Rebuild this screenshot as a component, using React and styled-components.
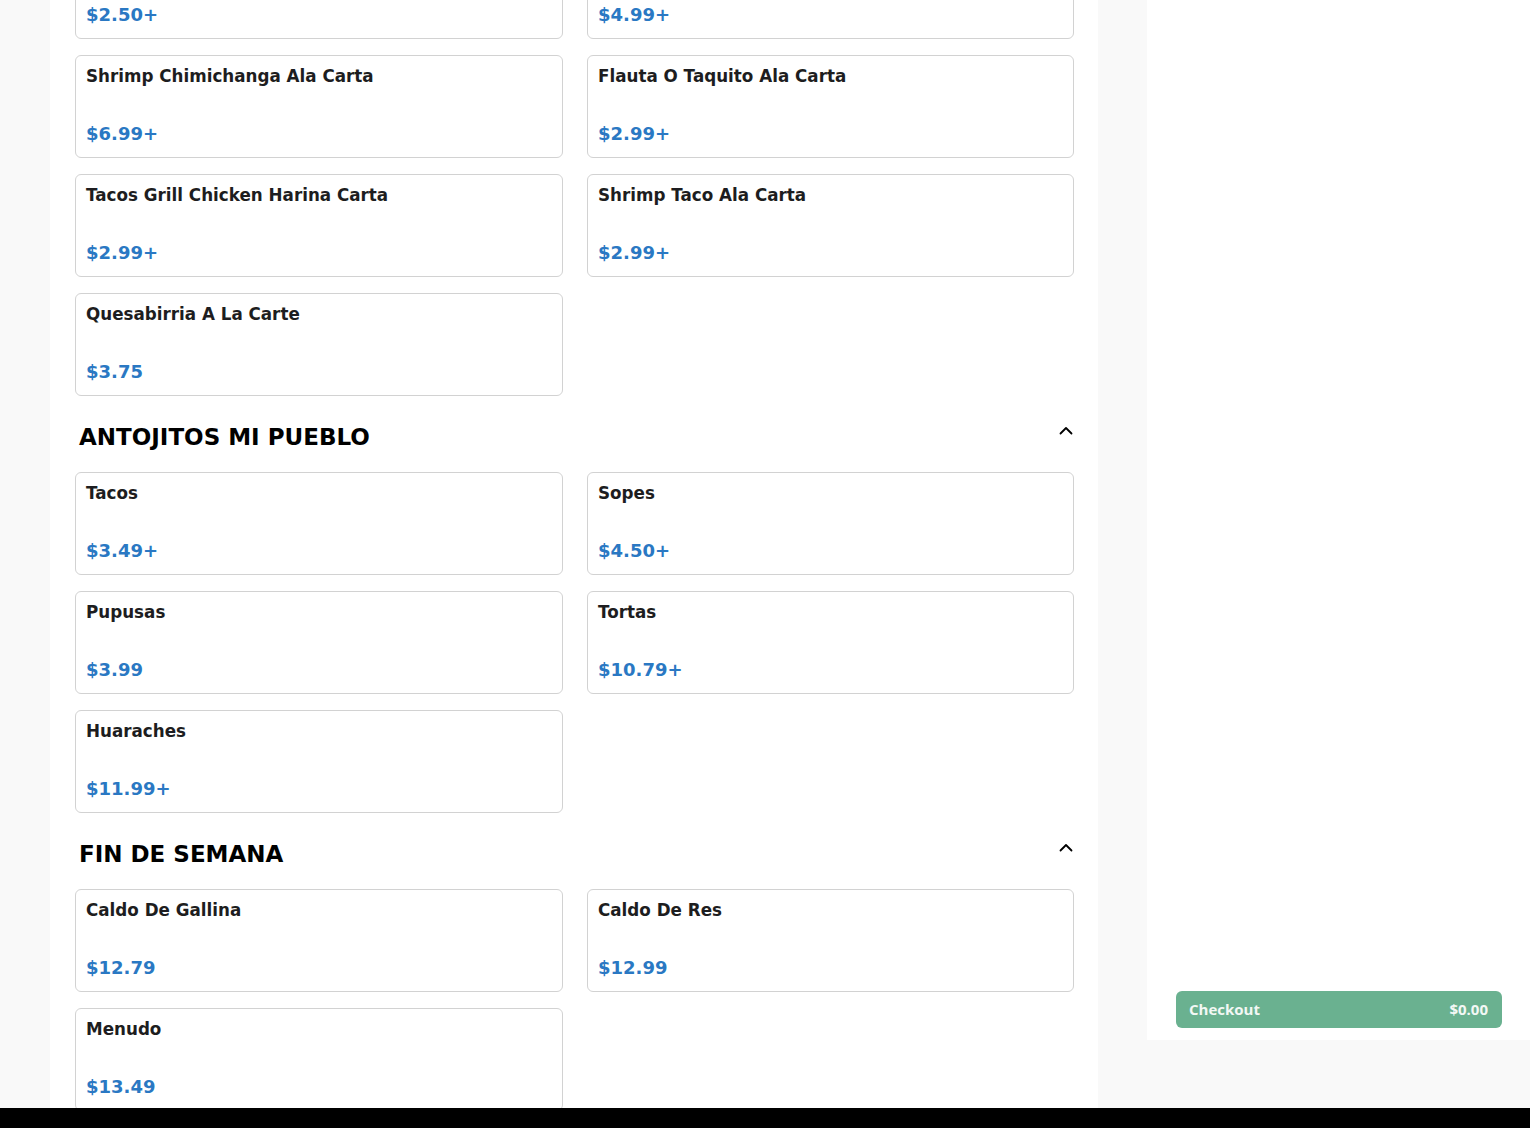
import React from "react";
import styled, { createGlobalStyle } from "styled-components";

const GlobalStyle = createGlobalStyle`
  html, body { margin: 0; padding: 0; background: #f9f9f9; }
  body { font-family: "DejaVu Sans", "Liberation Sans", sans-serif; }
  * { box-sizing: border-box; }
`;

const Viewport = styled.div`
  height: 1128px;
  display: flex;
  flex-direction: column;
  overflow: hidden;
`;

const Page = styled.div`
  height: 1108px;
  overflow: hidden;
  display: flex;
  align-items: flex-start;
  padding-left: 50px;
  gap: 49px;
  background: #f9f9f9;
`;

const BlackBar = styled.div`
  height: 20px;
  flex: none;
  background: #000;
`;

const Main = styled.main`
  width: 1048px;
  flex: none;
  height: 1108px;
  background: #fff;
  padding: 0 24px 0 25px;
`;

const Menu = styled.div`
  margin-top: -64px;
`;

const Section = styled.section``;

const SectionHeader = styled.div`
  display: flex;
  justify-content: space-between;
  align-items: flex-start;
  padding: 23px 1px 17px 4px;
`;

const SectionTitle = styled.h2`
  margin: 0;
  font-size: 23px;
  line-height: 36px;
  font-weight: 700;
  color: #000;
`;

const Toggle = styled.button`
  border: 0;
  background: none;
  padding: 0;
  margin-top: 7px;
  width: 14px;
  height: 9px;
  display: flex;
  cursor: pointer;
`;

const Grid = styled.div`
  display: grid;
  grid-template-columns: 488px 487px;
  column-gap: 24px;
  row-gap: 16px;
`;

const Card = styled.div`
  height: 103px;
  border: 1px solid #d2d2d2;
  border-radius: 6px;
  background: #fff;
  padding: 10px;
  display: flex;
  flex-direction: column;
  justify-content: space-between;
`;

const ItemName = styled.div`
  font-size: 16.75px;
  line-height: 21px;
  font-weight: 700;
  color: #1d1d20;
`;

const Price = styled.div`
  font-size: 18px;
  line-height: 27px;
  font-weight: 700;
  color: #2a78c3;
`;

const Aside = styled.aside`
  flex: 1;
  height: 1040px;
  background: #fff;
  display: flex;
  flex-direction: column;
  justify-content: flex-end;
  padding: 0 28px 12px 29px;
`;

const CheckoutButton = styled.button`
  height: 37px;
  border: 0;
  border-radius: 6px;
  background: #6ab190;
  color: #f3f8f5;
  font-family: "Open Sans", "Lato", sans-serif;
  font-weight: 700;
  font-size: 15px;
  display: flex;
  align-items: center;
  justify-content: space-between;
  padding: 0 14px 1px 13px;
  cursor: pointer;
`;

const ChevronUp = () => (
  <svg width="14" height="9" viewBox="0 0 14 9" fill="none">
    <path d="M1.5 7.5L7 2L12.5 7.5" stroke="#000" strokeWidth="1.8" strokeLinecap="round" strokeLinejoin="round" />
  </svg>
);

const sections = [
  {
    title: null,
    items: [
      ["Taco Ala Carta", "$2.50+"],
      ["Burrito Ala Carta", "$4.99+"],
      ["Shrimp Chimichanga Ala Carta", "$6.99+"],
      ["Flauta O Taquito Ala Carta", "$2.99+"],
      ["Tacos Grill Chicken Harina Carta", "$2.99+"],
      ["Shrimp Taco Ala Carta", "$2.99+"],
      ["Quesabirria A La Carte", "$3.75"],
    ],
  },
  {
    title: "ANTOJITOS MI PUEBLO",
    items: [
      ["Tacos", "$3.49+"],
      ["Sopes", "$4.50+"],
      ["Pupusas", "$3.99"],
      ["Tortas", "$10.79+"],
      ["Huaraches", "$11.99+"],
    ],
  },
  {
    title: "FIN DE SEMANA",
    items: [
      ["Caldo De Gallina", "$12.79"],
      ["Caldo De Res", "$12.99"],
      ["Menudo", "$13.49"],
    ],
  },
];

export default function App() {
  return (
    <>
      <GlobalStyle />
      <Viewport>
        <Page>
          <Main>
            <Menu>
              {sections.map((s, i) => (
                <Section key={i}>
                  {s.title && (
                    <SectionHeader>
                      <SectionTitle>{s.title}</SectionTitle>
                      <Toggle aria-label="Collapse">
                        <ChevronUp />
                      </Toggle>
                    </SectionHeader>
                  )}
                  <Grid>
                    {s.items.map(([name, price]) => (
                      <Card key={name}>
                        <ItemName>{name}</ItemName>
                        <Price>{price}</Price>
                      </Card>
                    ))}
                  </Grid>
                </Section>
              ))}
            </Menu>
          </Main>
          <Aside>
            <CheckoutButton>
              <span>Checkout</span>
              <span>$0.00</span>
            </CheckoutButton>
          </Aside>
        </Page>
        <BlackBar />
      </Viewport>
    </>
  );
}
